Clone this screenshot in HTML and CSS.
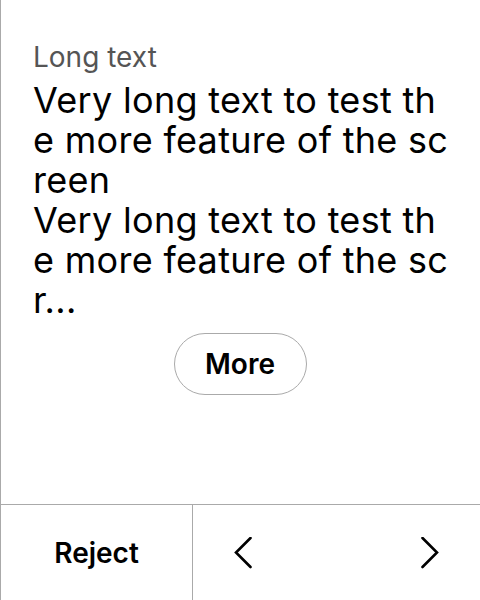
FILE: index.html
```html
<!DOCTYPE html>
<html>
<head>
<meta charset="utf-8">
<link rel="stylesheet" href="styles.css">
</head>
<body>
<div class="screen">
  <main class="content">
    <div class="label">Long text</div>
    <div class="body-text">Very long text to test the more feature of the screen<br>Very long text to test the more feature of the scr...</div>
    <div class="more-row"><button class="more-btn">More</button></div>
  </main>
  <footer class="actions">
    <button class="reject">Reject</button>
    <div class="nav">
      <button class="nav-btn" aria-label="Previous">
        <svg width="32" height="32" viewBox="0 0 32 32"><path d="M23.5 1 L9 15.5 L23.5 30" fill="none" stroke="#000" stroke-width="2.6" stroke-linecap="round" stroke-linejoin="miter"/></svg>
      </button>
      <button class="nav-btn" aria-label="Next">
        <svg width="32" height="32" viewBox="0 0 32 32"><path d="M8.5 1 L23 15.5 L8.5 30" fill="none" stroke="#000" stroke-width="2.6" stroke-linecap="round" stroke-linejoin="miter"/></svg>
      </button>
    </div>
  </footer>
</div>
</body>
</html>
```
FILE: styles.css
```css
html, body {
  margin: 0;
  padding: 0;
  background: #fff;
}
body {
  font-family: "Inter", "Noto Sans", sans-serif;
  color: #000;
}
.screen {
  width: 480px;
  height: 600px;
  box-sizing: border-box;
  border-left: 1px solid #aaa;
  display: flex;
  flex-direction: column;
}
.content {
  flex: 1;
  padding: 40px 27px 0 32px;
  display: flex;
  flex-direction: column;
}
.label {
  font-size: 28px;
  line-height: 34px;
  color: #555;
}
.body-text {
  font-size: 36px;
  line-height: 40px;
  letter-spacing: 0.3px;
  word-break: break-all;
  margin-top: 6px;
}
.more-row {
  display: flex;
  justify-content: center;
  margin-top: 13px;
  padding-right: 6px;
}
.more-btn {
  font-family: inherit;
  font-size: 28px;
  font-weight: 600;
  color: #000;
  background: #fff;
  border: 1px solid #aaa;
  border-radius: 31px;
  width: 133px;
  height: 62px;
  padding: 0;
}
.actions {
  height: 96px;
  box-sizing: border-box;
  border-top: 1px solid #aaa;
  display: flex;
}
.reject {
  width: 192px;
  border: none;
  border-right: 1px solid #aaa;
  background: #fff;
  font-family: inherit;
  font-size: 28px;
  font-weight: 600;
  color: #000;
  padding: 0;
}
.nav {
  flex: 1;
  display: flex;
  justify-content: space-between;
  align-items: center;
  padding: 0 34px;
}
.nav-btn {
  border: none;
  background: none;
  padding: 0;
  width: 32px;
  height: 32px;
  display: flex;
}
```
